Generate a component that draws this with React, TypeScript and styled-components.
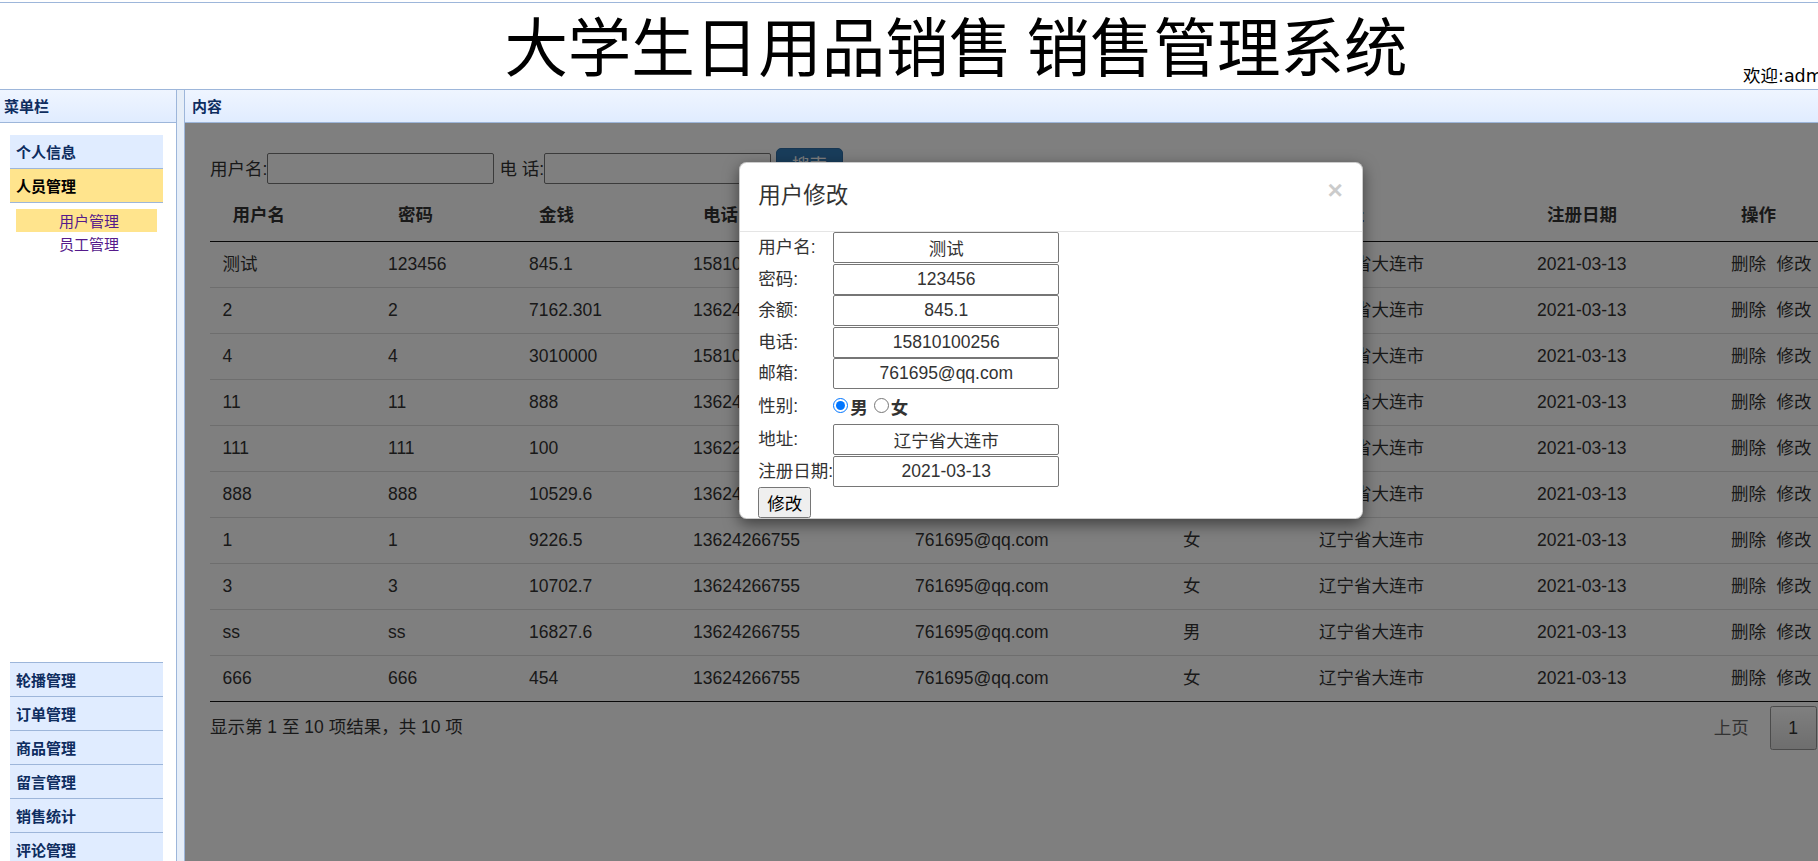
import React from "react";
import styled, { createGlobalStyle } from "styled-components";

const LINE = "#9db6da";
const CJK = `"Noto Sans CJK SC", "Liberation Sans", sans-serif`;
const WEB = `"Liberation Sans", "Noto Sans CJK SC", sans-serif`;

const GlobalStyle = createGlobalStyle`
  html, body { margin: 0; padding: 0; overflow: hidden; background: #fff; }
  body { font-family: ${WEB}; }
`;

/* ---------- page frame ---------- */

const Page = styled.div`
  width: 1916px;
  height: 900px;
  display: flex;
  flex-direction: column;
`;

const Header = styled.header`
  box-sizing: border-box;
  flex: none;
  margin-top: 2px;
  height: 88px;
  border-top: 1px solid ${LINE};
  border-bottom: 1px solid ${LINE};
  display: grid;
  grid-template-columns: 1fr auto 1fr;
`;

const Title = styled.h1`
  grid-column: 2;
  margin: 0;
  padding: 9px 4px 0 0;
  font: 400 63.5px/63.5px ${CJK};
  color: #000;
  white-space: nowrap;
`;

const Welcome = styled.div`
  grid-column: 3;
  justify-self: end;
  align-self: end;
  width: 173px;
  margin-bottom: 4px;
  font: 400 17.5px/18px "DejaVu Sans", "Noto Sans CJK SC", sans-serif;
  color: #000;
  white-space: nowrap;
`;

const Main = styled.div`
  flex: 1;
  display: flex;
  min-height: 0;
`;

const PanelHeader = styled.div<{ $pad: number }>`
  box-sizing: border-box;
  flex: none;
  height: 33px;
  padding-left: ${(p) => p.$pad}px;
  background: linear-gradient(to bottom, #eff5ff 0%, #e0ecff 100%);
  border-bottom: 1px solid ${LINE};
  font: bold 15px/31px ${CJK};
  color: #0e2d5f;
`;

/* ---------- left menu ---------- */

const Sidebar = styled.aside`
  box-sizing: border-box;
  flex: none;
  width: 177px;
  border-right: 1px solid ${LINE};
  display: flex;
  flex-direction: column;
  background: #fff;
`;

const Accordion = styled.div`
  width: 153px;
  margin: 12px 0 0 10px;
`;

const AccordionHeader = styled.div<{ $selected?: boolean }>`
  box-sizing: border-box;
  height: 34px;
  padding-left: 6px;
  border-bottom: 1px solid ${LINE};
  background: ${(p) => (p.$selected ? "#ffe48d" : "#e0ecff")};
  color: ${(p) => (p.$selected ? "#000" : "#0e2d5f")};
  font: bold 15px/33px ${CJK};
`;

const AccordionBody = styled.div`
  box-sizing: border-box;
  height: 460px;
  padding: 6px;
  border-bottom: 1px solid ${LINE};
  background: #fff;
`;

const MenuLink = styled.a<{ $active?: boolean }>`
  display: block;
  height: 23px;
  padding-left: 43px;
  background: ${(p) => (p.$active ? "#ffe48d" : "transparent")};
  font: 400 15px/23px ${CJK};
  color: #551a8b;
  text-decoration: none;
`;

const Splitter = styled.div`
  flex: none;
  width: 7px;
  background: #e6eef8;
`;

/* ---------- content panel ---------- */

const Content = styled.section`
  flex: 1;
  display: flex;
  flex-direction: column;
  border-left: 1px solid ${LINE};
  min-width: 0;
`;

const Frame = styled.div`
  position: relative;
  flex: 1;
  overflow: hidden;
  background: #fff;
`;

const FramePage = styled.div`
  padding: 25px;
  font: 400 17.5px/25px ${WEB};
  color: #333;
`;

const SearchBar = styled.div`
  display: flex;
  align-items: center;
  height: 42.5px;
  white-space: pre;
`;

const SearchLabel = styled.span<{ $gap?: number }>`
  margin-left: ${(p) => p.$gap ?? 0}px;
`;

const SearchInput = styled.input`
  box-sizing: border-box;
  width: 227px;
  height: 31px;
  margin-bottom: 2px;
  border: 1px solid #767676;
  border-radius: 2px;
  background: #fff;
`;

const SearchButton = styled.button`
  box-sizing: border-box;
  height: 42.5px;
  margin-left: 5px;
  padding: 2px 15px 13px;
  border: 1px solid #2e6da4;
  border-radius: 5px;
  background: #337ab7;
  color: #fff;
  font: 400 17.5px/25px ${CJK};
`;

const DataTable = styled.table`
  width: 1681px;
  table-layout: fixed;
  border-collapse: separate;
  border-spacing: 0;
  border-bottom: 1px solid #111;
`;

const HeadCell = styled.th`
  padding: 12.5px 22.5px;
  border-bottom: 1px solid #111;
  text-align: left;
  font: bold 17.5px/25px ${WEB};
  color: #333;
  white-space: nowrap;
  overflow: hidden;
`;

const Row = styled.tr<{ $first?: boolean }>`
  & > td {
    border-top: ${(p) => (p.$first ? "none" : "1px solid #ddd")};
  }
`;

const Cell = styled.td`
  padding: 10px 12.5px;
  white-space: nowrap;
  overflow: hidden;
`;

const ActionLink = styled.a`
  color: #333;
  text-decoration: none;
  & + & {
    margin-left: 10.5px;
  }
`;

const TableFooter = styled.div`
  display: flex;
  justify-content: space-between;
  width: 1681px;
`;

const Info = styled.div`
  padding-top: 13.2px;
`;

const Pager = styled.div`
  display: flex;
  gap: 2.5px;
  padding-top: 4.4px;
`;

const PageButton = styled.span<{ $current?: boolean; $disabled?: boolean }>`
  box-sizing: border-box;
  min-width: 46px;
  padding: 8.75px 17.5px;
  text-align: center;
  border: 1px solid ${(p) => (p.$current ? "#979797" : "transparent")};
  border-radius: 2.5px;
  background: ${(p) =>
    p.$current ? "linear-gradient(to bottom, #fff 0%, #dcdcdc 100%)" : "transparent"};
  color: ${(p) => (p.$disabled ? "#666" : "#333")};
  font: 400 17.5px/25px ${WEB};
`;

/* ---------- modal ---------- */

const Backdrop = styled.div`
  position: absolute;
  inset: 0;
  background: rgba(0, 0, 0, 0.5);
`;

const Modal = styled.div`
  position: absolute;
  top: 39px;
  left: 0;
  right: 0;
  box-sizing: border-box;
  width: 624px;
  margin: 0 auto;
  background: #fff;
  border: 1px solid rgba(0, 0, 0, 0.2);
  border-radius: 7.5px;
  box-shadow: 0 5px 15px rgba(0, 0, 0, 0.5);
  font: 400 17.5px/25px ${WEB};
  color: #333;
`;

const ModalHeader = styled.div`
  display: flex;
  justify-content: space-between;
  align-items: flex-start;
  padding: 14px 18.75px 22px;
  border-bottom: 1px solid #e5e5e5;
`;

const ModalTitle = styled.h4`
  margin: 0;
  font: 400 22.5px/32px ${CJK};
  color: #333;
`;

const CloseButton = styled.button`
  margin-top: 0;
  padding: 0;
  border: 0;
  background: none;
  font: bold 26.25px/1 ${WEB};
  color: #000;
  opacity: 0.2;
  text-shadow: 0 1px 0 #fff;
`;

const ModalBody = styled.div`
  padding: 0 18.75px 0.5px;
`;

const EditForm = styled.div`
  display: grid;
  grid-template-columns: 75px 226px;
  grid-template-rows: repeat(5, 31.5px) 34.5px repeat(2, 31.5px) 30.5px;
`;

const FieldLabel = styled.span`
  align-self: center;
  font: 400 17.5px/25px ${WEB};
  white-space: nowrap;
`;

const FieldInput = styled.input`
  box-sizing: border-box;
  width: 226px;
  height: 31px;
  padding: 0 2px;
  border: 1px solid #767676;
  border-radius: 2px;
  background: #fff;
  text-align: center;
  font: 400 17.5px/25px ${WEB};
  color: #333;
`;

const RadioGroup = styled.div`
  display: flex;
  align-items: center;
  align-self: center;
`;

const Radio = styled.input`
  width: 15px;
  height: 15px;
  margin: 0 2px 3px 0;
`;

const RadioText = styled.label<{ $gap?: number }>`
  margin-right: ${(p) => p.$gap ?? 0}px;
  font: bold 17.5px/25px ${CJK};
  color: #333;
`;

const SubmitButton = styled.button`
  grid-column: 1 / span 2;
  justify-self: start;
  box-sizing: border-box;
  height: 30.5px;
  padding: 0 8px;
  border: 1px solid #767676;
  border-radius: 2.5px;
  background: #efefef;
  font: 400 17.5px/25px ${CJK};
  color: #000;
`;

/* ---------- data ---------- */

const columns = [
  { title: "用户名", width: 165.5 },
  { title: "密码", width: 141 },
  { title: "金钱", width: 164 },
  { title: "电话", width: 222 },
  { title: "邮箱", width: 268 },
  { title: "性别", width: 136 },
  { title: "地址", width: 218 },
  { title: "注册日期", width: 194 },
  { title: "操作", width: 172.5 },
];

type User = [string, string, string, string, string];

const users: User[] = [
  ["测试", "123456", "845.1", "15810100256", "男"],
  ["2", "2", "7162.301", "13624266755", "男"],
  ["4", "4", "3010000", "15810100256", "女"],
  ["11", "11", "888", "13624266755", "女"],
  ["111", "111", "100", "13622266755", "男"],
  ["888", "888", "10529.6", "13624266755", "女"],
  ["1", "1", "9226.5", "13624266755", "女"],
  ["3", "3", "10702.7", "13624266755", "女"],
  ["ss", "ss", "16827.6", "13624266755", "男"],
  ["666", "666", "454", "13624266755", "女"],
];

const topMenus = ["个人信息"];
const bottomMenus = ["轮播管理", "订单管理", "商品管理", "留言管理", "销售统计", "评论管理"];

const editFields: [string, string][] = [
  ["用户名:", "测试"],
  ["密码:", "123456"],
  ["余额:", "845.1"],
  ["电话:", "15810100256"],
  ["邮箱:", "761695@qq.com"],
];

export default function App() {
  return (
    <>
      <GlobalStyle />
      <Page>
        <Header>
          <Title>大学生日用品销售 销售管理系统</Title>
          <Welcome>欢迎:admin</Welcome>
        </Header>
        <Main>
          <Sidebar>
            <PanelHeader $pad={4}>菜单栏</PanelHeader>
            <Accordion>
              {topMenus.map((m) => (
                <AccordionHeader key={m}>{m}</AccordionHeader>
              ))}
              <AccordionHeader $selected>人员管理</AccordionHeader>
              <AccordionBody>
                <MenuLink href="#" $active>
                  用户管理
                </MenuLink>
                <MenuLink href="#">员工管理</MenuLink>
              </AccordionBody>
              {bottomMenus.map((m) => (
                <AccordionHeader key={m}>{m}</AccordionHeader>
              ))}
            </Accordion>
          </Sidebar>
          <Splitter />
          <Content>
            <PanelHeader $pad={7}>内容</PanelHeader>
            <Frame>
              <FramePage>
                <SearchBar>
                  <SearchLabel>用户名:</SearchLabel>
                  <SearchInput />
                  <SearchLabel $gap={5}>电 话:</SearchLabel>
                  <SearchInput />
                  <SearchButton>搜索</SearchButton>
                </SearchBar>
                <DataTable>
                  <colgroup>
                    {columns.map((c) => (
                      <col key={c.title} style={{ width: c.width }} />
                    ))}
                  </colgroup>
                  <thead>
                    <tr>
                      {columns.map((c) => (
                        <HeadCell key={c.title}>{c.title}</HeadCell>
                      ))}
                    </tr>
                  </thead>
                  <tbody>
                    {users.map((u, i) => (
                      <Row key={i} $first={i === 0}>
                        <Cell>{u[0]}</Cell>
                        <Cell>{u[1]}</Cell>
                        <Cell>{u[2]}</Cell>
                        <Cell>{u[3]}</Cell>
                        <Cell>761695@qq.com</Cell>
                        <Cell>{u[4]}</Cell>
                        <Cell>辽宁省大连市</Cell>
                        <Cell>2021-03-13</Cell>
                        <Cell>
                          <ActionLink href="#">删除</ActionLink>
                          <ActionLink href="#">修改</ActionLink>
                        </Cell>
                      </Row>
                    ))}
                  </tbody>
                </DataTable>
                <TableFooter>
                  <Info>显示第 1 至 10 项结果，共 10 项</Info>
                  <Pager>
                    <PageButton $disabled>上页</PageButton>
                    <PageButton $current>1</PageButton>
                    <PageButton $disabled>下页</PageButton>
                  </Pager>
                </TableFooter>
              </FramePage>
              <Backdrop />
              <Modal>
                <ModalHeader>
                  <ModalTitle>用户修改</ModalTitle>
                  <CloseButton>×</CloseButton>
                </ModalHeader>
                <ModalBody>
                  <EditForm>
                    {editFields.map(([label, value]) => (
                      <React.Fragment key={label}>
                        <FieldLabel>{label}</FieldLabel>
                        <FieldInput defaultValue={value} />
                      </React.Fragment>
                    ))}
                    <FieldLabel>性别:</FieldLabel>
                    <RadioGroup>
                      <Radio type="radio" name="sex" id="sex-m" defaultChecked />
                      <RadioText htmlFor="sex-m" $gap={6}>
                        男
                      </RadioText>
                      <Radio type="radio" name="sex" id="sex-f" />
                      <RadioText htmlFor="sex-f">女</RadioText>
                    </RadioGroup>
                    <FieldLabel>地址:</FieldLabel>
                    <FieldInput defaultValue="辽宁省大连市" />
                    <FieldLabel>注册日期:</FieldLabel>
                    <FieldInput defaultValue="2021-03-13" />
                    <SubmitButton>修改</SubmitButton>
                  </EditForm>
                </ModalBody>
              </Modal>
            </Frame>
          </Content>
        </Main>
      </Page>
    </>
  );
}
